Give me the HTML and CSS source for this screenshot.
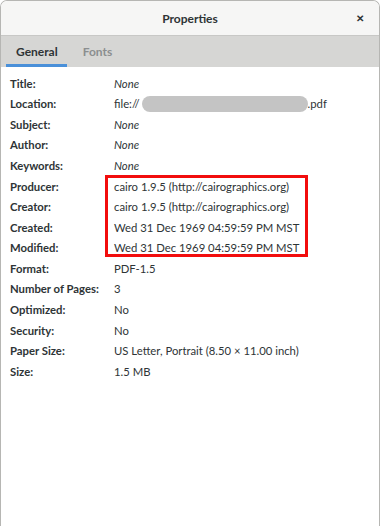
FILE: index.html
```html
<!DOCTYPE html>
<html lang="en">
<head>
  <meta charset="UTF-8">
  <title>Properties</title>
  <link rel="stylesheet" href="styles.css">
</head>
<body>
  <div class="window">
    <!-- Header bar -->
    <div class="headerbar">
      <span class="title">Properties</span>
      <span class="close">&#x2715;</span>
    </div>

    <!-- Tabs -->
    <div class="tabs">
      <span class="tab active">General</span>
      <span class="tab">Fonts</span>
    </div>

    <!-- Properties list -->
    <div class="props">
      <div class="label">Title:</div><div class="value none">None</div>
      <div class="label">Location:</div><div class="value">file://<span class="blur"></span>.pdf</div>
      <div class="label">Subject:</div><div class="value none">None</div>
      <div class="label">Author:</div><div class="value none">None</div>
      <div class="label">Keywords:</div><div class="value none">None</div>
      <div class="label">Producer:</div><div class="value">cairo 1.9.5 (http://cairographics.org)</div>
      <div class="label">Creator:</div><div class="value">cairo 1.9.5 (http://cairographics.org)</div>
      <div class="label">Created:</div><div class="value">Wed 31 Dec 1969 04:59:59 PM MST</div>
      <div class="label">Modified:</div><div class="value">Wed 31 Dec 1969 04:59:59 PM MST</div>
      <div class="label">Format:</div><div class="value">PDF-1.5</div>
      <div class="label">Number of Pages:</div><div class="value">3</div>
      <div class="label">Optimized:</div><div class="value">No</div>
      <div class="label">Security:</div><div class="value">No</div>
      <div class="label">Paper Size:</div><div class="value">US Letter, Portrait (8.50 × 11.00 inch)</div>
      <div class="label">Size:</div><div class="value">1.5 MB</div>

      <!-- Highlight box -->
      <div class="highlight"></div>
    </div>
  </div>
</body>
</html>
```

FILE: styles.css
```css
/* Base */
body {
  margin: 0;
  font-family: Lato, "Noto Sans", sans-serif;
  font-size: 11.3px;
  color: #2e3436;
  background-color: #ffffff;
}
.window {
  height: 526px;
  box-sizing: border-box;
  border: 1px solid #b6b6b3;
  border-bottom: none;
  border-radius: 7px 7px 0 0;
  overflow: hidden;
  background-color: #ffffff;
}
/* Header bar */
.headerbar {
  height: 34px;
  position: relative;
  display: flex;
  align-items: center;
  justify-content: center;
  background-color: #f6f6f5;
  border-bottom: 1px solid #c8c8c6;
}
.title {
  font-weight: bold;
  font-size: 12px;
  color: #2e3436;
}
.close {
  position: absolute;
  right: 15px;
  top: 11px;
  font-size: 10px;
  font-weight: bold;
  color: #2e3436;
}
/* Tabs */
.tabs {
  height: 31px;
  display: flex;
  padding-left: 5px;
  background-color: #d6d6d4;
}
.tab {
  box-sizing: border-box;
  height: 31px;
  padding: 8px 10px 0;
  width: 61px;
  text-align: center;
  font-weight: bold;
  font-size: 12px;
  color: #8b8e8f;
}
.tab.active {
  color: #2e3436;
  border-bottom: 3px solid #4a90d9;
}
/* Properties grid */
.props {
  position: relative;
  display: grid;
  grid-template-columns: 104px auto;
  grid-auto-rows: 20.57px;
  align-items: center;
  padding: 6px 0 0 9px;
}
.label {
  font-weight: bold;
  white-space: nowrap;
}
.value {
  display: flex;
  align-items: center;
  white-space: nowrap;
}
.none {
  font-style: italic;
}
.blur {
  display: inline-block;
  width: 166px;
  height: 16px;
  margin-left: 2px;
  border-radius: 8px;
  background-color: #c4c4c4;
}
.highlight {
  position: absolute;
  left: 104px;
  top: 108px;
  width: 197px;
  height: 76px;
  border: 3px solid #f20d0d;
}
```
